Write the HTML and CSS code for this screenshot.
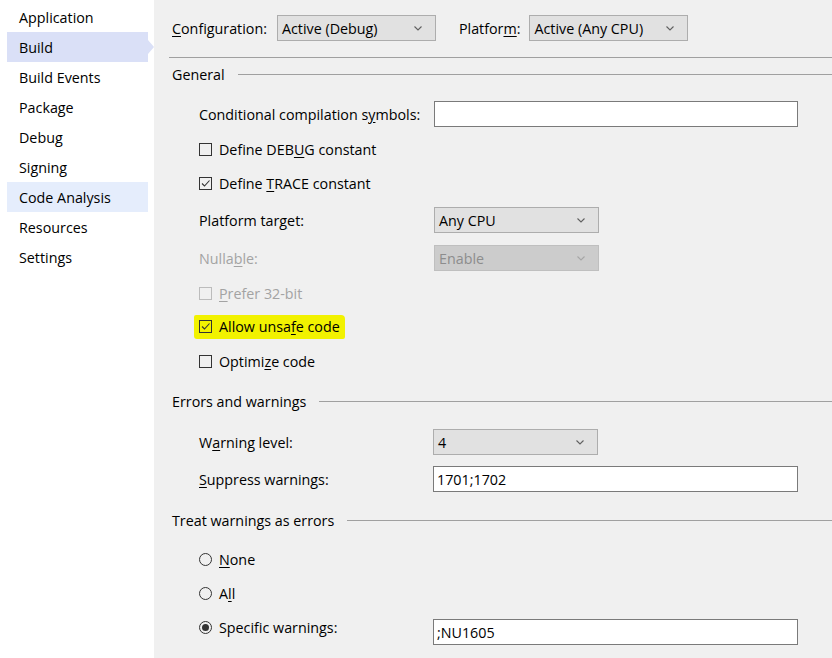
FILE: index.html
```html
<!DOCTYPE html>
<html>
<head>
<meta charset="utf-8">
<link rel="stylesheet" href="styles.css">
</head>
<body>
<div class="app">
  <nav class="sidebar">
    <div class="nav-item">Application</div>
    <div class="nav-item selected">Build</div>
    <div class="nav-item">Build Events</div>
    <div class="nav-item">Package</div>
    <div class="nav-item">Debug</div>
    <div class="nav-item">Signing</div>
    <div class="nav-item hover">Code Analysis</div>
    <div class="nav-item">Resources</div>
    <div class="nav-item">Settings</div>
  </nav>
  <main class="main">
    <div class="topbar">
      <span class="lbl"><u>C</u>onfiguration:</span>
      <div class="select cfg"><span>Active (Debug)</span><svg class="chev" viewBox="0 0 8 5"><path d="M0.5 0.5 L4 4 L7.5 0.5" /></svg></div>
      <span class="lbl plat">Platfor<u>m</u>:</span>
      <div class="select cfg"><span>Active (Any CPU)</span><svg class="chev" viewBox="0 0 8 5"><path d="M0.5 0.5 L4 4 L7.5 0.5" /></svg></div>
    </div>
    <div class="divider"></div>

    <div class="heading r-general"><span>General</span><div class="hline"></div></div>

    <div class="row r-cond">
      <span class="label">Conditional compilation s<u>y</u>mbols:</span>
      <div class="input wide"></div>
    </div>

    <div class="check r-debug"><span class="box"></span><span>Define DEB<u>U</u>G constant</span></div>
    <div class="check r-trace"><span class="box"><svg viewBox="0 0 11 11"><path d="M2 5.5 L4.5 8 L9.5 2.5"/></svg></span><span>Define <u>T</u>RACE constant</span></div>

    <div class="row r-ptarget">
      <span class="label">Platform tar<u>g</u>et:</span>
      <div class="select narrow"><span>Any CPU</span><svg class="chev" viewBox="0 0 8 5"><path d="M0.5 0.5 L4 4 L7.5 0.5" /></svg></div>
    </div>
    <div class="row r-nullable disabled">
      <span class="label">Nulla<u>b</u>le:</span>
      <div class="select narrow off"><span>Enable</span><svg class="chev" viewBox="0 0 8 5"><path d="M0.5 0.5 L4 4 L7.5 0.5" /></svg></div>
    </div>

    <div class="check r-prefer disabled"><span class="box"></span><span><u>P</u>refer 32-bit</span></div>
    <div class="check r-allow"><span class="marker"><span class="box"><svg viewBox="0 0 11 11"><path d="M2 5.5 L4.5 8 L9.5 2.5"/></svg></span><span>Allow unsa<u>f</u>e code</span></span></div>
    <div class="check r-opt"><span class="box"></span><span>Optimi<u>z</u>e code</span></div>

    <div class="heading r-errors"><span>Errors and warnings</span><div class="hline"></div></div>

    <div class="row r-wlevel">
      <span class="label lbl2">W<u>a</u>rning level:</span>
      <div class="select narrow"><span>4</span><svg class="chev" viewBox="0 0 8 5"><path d="M0.5 0.5 L4 4 L7.5 0.5" /></svg></div>
    </div>
    <div class="row r-suppress">
      <span class="label lbl2"><u>S</u>uppress warnings:</span>
      <div class="input wide2">1701;1702</div>
    </div>

    <div class="heading r-treat"><span>Treat warnings as errors</span><div class="hline"></div></div>

    <div class="check r-none"><span class="radio"></span><span><u>N</u>one</span></div>
    <div class="check r-all"><span class="radio"></span><span>A<u>l</u>l</span></div>
    <div class="row r-specific">
      <div class="check lbl2"><span class="radio on"></span><span>Specif<u>i</u>c warnings:</span></div>
      <div class="input wide2">;NU1605</div>
    </div>
  </main>
</div>
</body>
</html>
```

FILE: styles.css
```css
* { box-sizing: border-box; }
html, body { margin: 0; padding: 0; }
body {
  width: 832px;
  height: 658px;
  overflow: hidden;
  font-family: "Open Sans", "Noto Sans", sans-serif;
  font-size: 14.3px;
  color: #000;
  background: #f0f0f0;
}
u { text-decoration-thickness: 1px; text-underline-offset: 2px; }
.app { display: flex; height: 658px; }

.sidebar {
  width: 154px;
  flex: none;
  background: #fff;
  padding-top: 2px;
}
.nav-item {
  position: relative;
  height: 30px;
  margin-left: 7px;
  width: 141px;
  padding-left: 12px;
  display: flex;
  align-items: center;
}
.nav-item.selected { background: #dae0f7; }
.nav-item.selected::after {
  content: "";
  position: absolute;
  right: -6px;
  top: 8px;
  border-left: 6px solid #dae0f7;
  border-top: 7px solid transparent;
  border-bottom: 7px solid transparent;
}
.nav-item.hover { background: #e5edfc; }

.main {
  flex: 1;
  padding: 15px 0 0 18px;
  display: flex;
  flex-direction: column;
}

.topbar { display: flex; align-items: center; height: 26px; }
.lbl { margin-right: 10px; }
.lbl.plat { margin-left: 23px; margin-right: 9px; }

.select {
  height: 26px;
  border: 1px solid #adadad;
  background: #e1e1e1;
  display: flex;
  align-items: center;
  justify-content: space-between;
  padding: 0 13px 0 4px;
}
.select.cfg { width: 159px; }
.select.narrow { width: 165px; }
.select.off { background: #cccccc; border-color: #bfbfbf; color: #8d8d8d; }
.chev { width: 8px; height: 5px; }
.chev path { fill: none; stroke: #606060; stroke-width: 1.1; }
.select.off .chev path { stroke: #a6a6a6; }

.divider { margin: 16px 0 0 -3px; height: 1px; background: #a0a0a0; }

.heading { display: flex; align-items: center; height: 20px; }
.heading .hline { flex: 1; height: 1px; background: #a0a0a0; margin-left: 13px; }

.row { display: flex; align-items: center; height: 26px; padding-left: 27px; }
.label { width: 235px; flex: none; }
.lbl2 { width: 234px; flex: none; }
.input {
  height: 26px;
  background: #fff;
  border: 1px solid #7a7a7a;
  padding: 0 3px;
  display: flex;
  align-items: center;
}
.input.wide { width: 364px; }
.input.wide2 { width: 365px; }

.check { display: flex; align-items: center; height: 20px; padding-left: 27px; }
.row .check { padding-left: 0; }
.box {
  width: 13px; height: 13px;
  border: 1px solid #333;
  background: transparent;
  margin-right: 7px;
  flex: none;
  display: flex;
}
.box svg { width: 11px; height: 11px; }
.box svg path { fill: none; stroke: #333; stroke-width: 1.1; }
.disabled { color: #a3a3a3; }
.disabled .box { border-color: #bcbcbc; }

.radio {
  width: 13px; height: 13px;
  border: 1px solid #333;
  border-radius: 50%;
  margin-right: 7px;
  flex: none;
  display: flex;
  align-items: center;
  justify-content: center;
}
.radio.on::after { content: ""; width: 7px; height: 7px; border-radius: 50%; background: #333; }

.marker {
  display: inline-flex;
  align-items: center;
  background: #f2f200;
  margin-left: -5px;
  padding: 2px 5px 3px 5px;
  border-radius: 2px 4px 2px 3px;
}

.r-general { margin-top: 6px; }
.r-cond { margin-top: 17px; }
.r-debug { margin-top: 12px; }
.r-trace { margin-top: 14px; }
.r-ptarget { margin-top: 14px; }
.r-nullable { margin-top: 12px; }
.r-prefer { margin-top: 12px; }
.r-allow { margin-top: 14px; }
.r-opt { margin-top: 14px; }
.r-errors { margin-top: 20px; }
.r-wlevel { margin-top: 18px; }
.r-suppress { margin-top: 11px; }
.r-treat { margin-top: 18px; }
.r-none { margin-top: 19px; }
.r-all { margin-top: 14px; }
.r-specific { margin-top: 16px; }
.r-specific .check { margin-top: -9px; }
```
